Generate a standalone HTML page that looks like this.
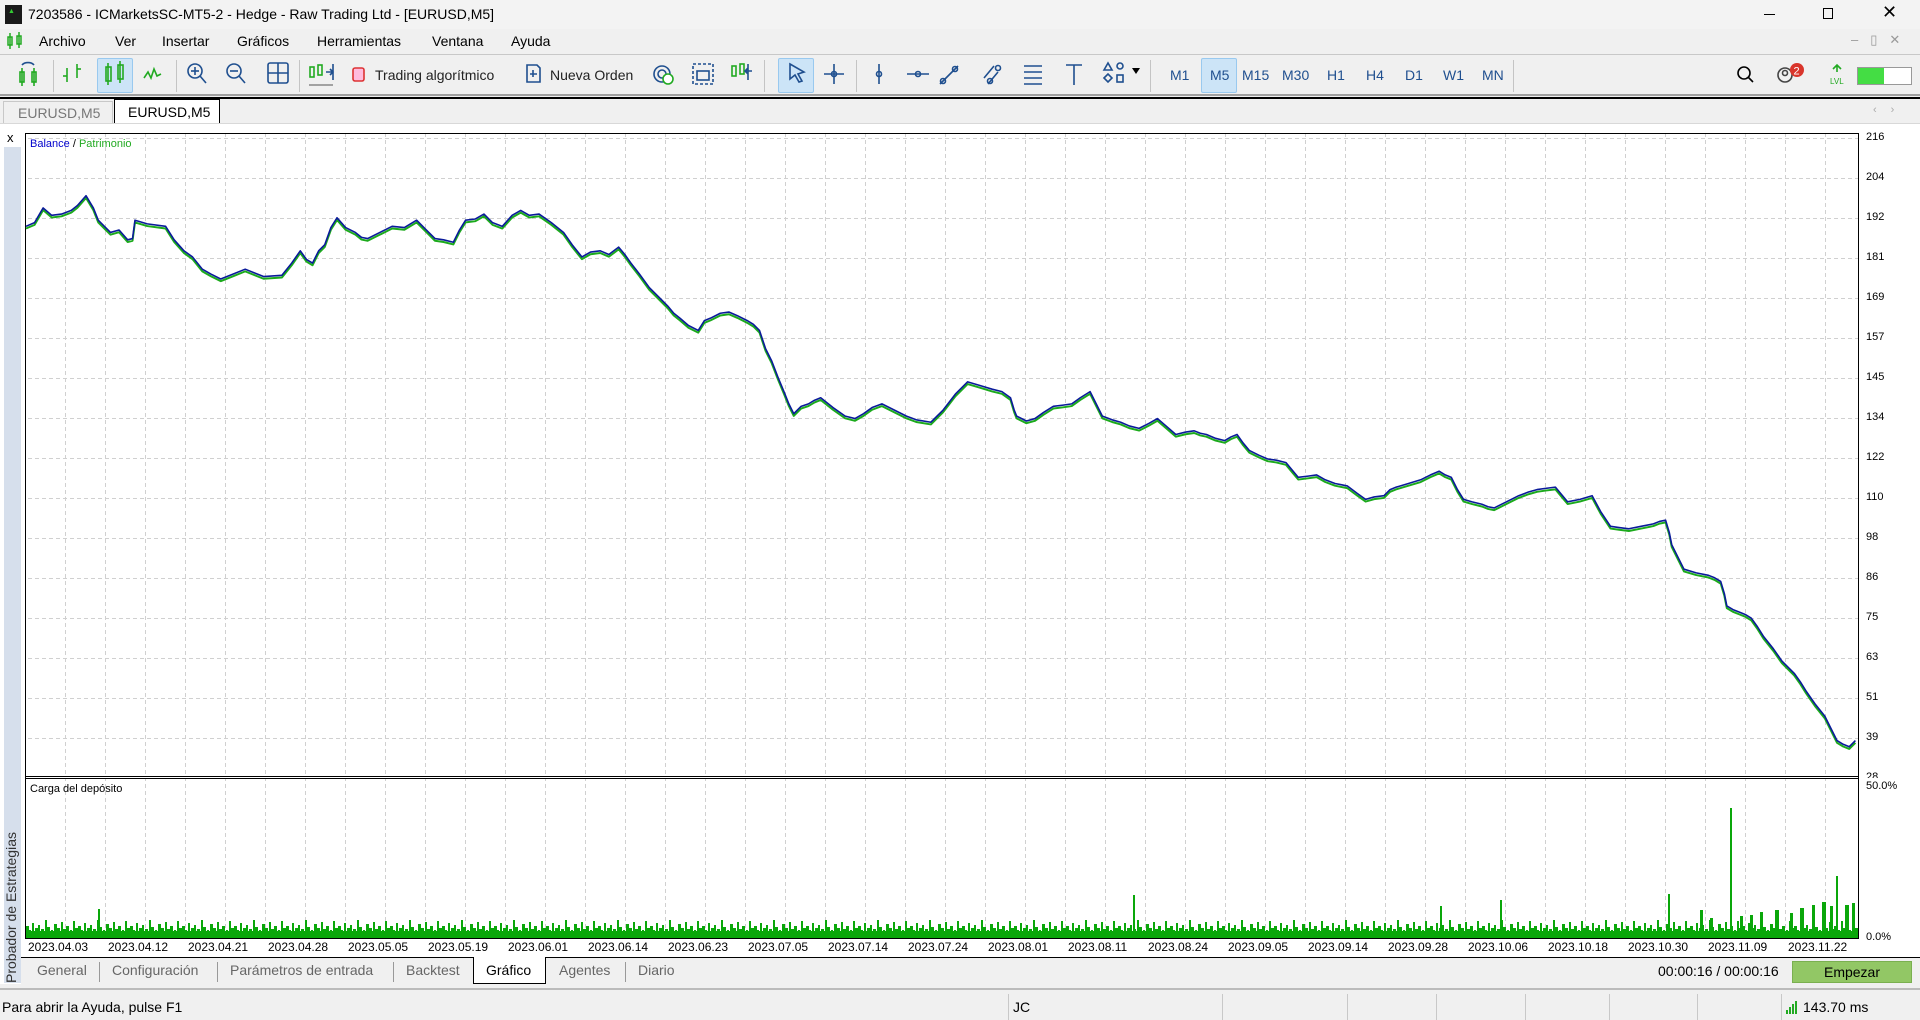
<!DOCTYPE html>
<html><head><meta charset="utf-8"><style>
*{margin:0;padding:0;box-sizing:border-box}
body{width:1920px;height:1020px;overflow:hidden;background:#f0f0f0;font-family:"Liberation Sans",sans-serif;color:#000;position:relative}
.a{position:absolute;white-space:nowrap}
.menu span{position:absolute;top:33px;font-size:14px}
.tb{position:absolute;top:54px;left:0;width:1920px;height:42px;border-top:1px solid #c8c8c8;border-bottom:2px solid #a0a0a0;background:#f0f0f0}
.sep{position:absolute;top:60px;width:1px;height:32px;background:#c4c4c4}
.hl{position:absolute;background:#cce4f7;border:1px solid #99c9ef;border-radius:2px}
.tf{position:absolute;top:67px;font-size:14px;color:#1f4f8f}
.ax{position:absolute;left:1866px;font-size:11px}
.dt{position:absolute;top:940px;font-size:12px}
.bt{position:absolute;top:962px;font-size:14px;color:#666}
.bs{position:absolute;top:962px;width:1px;height:20px;background:#999}
.ss{position:absolute;top:994px;width:1px;height:26px;background:#c8c8c8}
</style></head><body>
<div class="a" style="left:0;top:0;width:1920px;height:29px;background:#f3f3f3"></div>
<div class="a" style="left:5px;top:5px;width:17px;height:19px;background:#1a1a1a"></div>
<div class="a" style="left:8px;top:8px;font-size:7px;color:#3c3;font-weight:bold">▲</div>
<div class="a" style="left:28px;top:6px;font-size:14px">7203586 - ICMarketsSC-MT5-2 - Hedge - Raw Trading Ltd - [EURUSD,M5]</div>
<div class="a" style="left:1764px;top:14px;width:11px;height:1px;background:#000"></div>
<div class="a" style="left:1823px;top:8px;width:10px;height:11px;border:1px solid #000"></div>
<div class="a" style="left:1882px;top:2px;font-size:18px">✕</div>
<div class="menu">
<svg class="a" style="left:6px;top:31px" width="18" height="20"><g stroke="#2a2" fill="none" stroke-width="1.5"><rect x="2" y="6" width="4" height="8"/><line x1="4" y1="2" x2="4" y2="18"/><rect x="11" y="5" width="4" height="8"/><line x1="13" y1="1" x2="13" y2="17"/></g></svg>
<span style="left:39px">Archivo</span><span style="left:115px">Ver</span><span style="left:162px">Insertar</span><span style="left:237px">Gráficos</span><span style="left:317px">Herramientas</span><span style="left:432px">Ventana</span><span style="left:511px">Ayuda</span>
</div>
<div class="a" style="left:1851px;top:32px;font-size:13px;color:#999;letter-spacing:12px">–▯✕</div>
<div class="tb"></div>
<div class="hl" style="left:97px;top:58px;width:36px;height:35px"></div>
<div class="hl" style="left:778px;top:58px;width:36px;height:35px"></div>
<div class="hl" style="left:1201px;top:58px;width:36px;height:35px"></div>
<div class="sep" style="left:53px"></div><div class="sep" style="left:176px"></div><div class="sep" style="left:299px"></div><div class="sep" style="left:764px"></div><div class="sep" style="left:856px"></div><div class="sep" style="left:1150px"></div><div class="sep" style="left:1513px"></div>
<svg class="a" style="left:0;top:54px" width="1920" height="42"><g fill="none" stroke-width="1.6">
<g stroke="#2a2"><rect x="20" y="18" width="4" height="10"/><rect x="32" y="18" width="4" height="10"/><line x1="22" y1="14" x2="22" y2="32"/><line x1="34" y1="14" x2="34" y2="32"/></g><path d="M22 11 a7 5 0 0 1 12 0" stroke="#1f4f8f"/>
<g stroke="#2a2"><line x1="67" y1="14" x2="67" y2="28"/><line x1="63" y1="22" x2="67" y2="22"/><line x1="77" y1="10" x2="77" y2="24"/><line x1="77" y1="15" x2="81" y2="15"/></g>
<g stroke="#2a2"><rect x="106" y="13" width="5" height="14"/><rect x="118" y="11" width="5" height="14"/><line x1="108" y1="9" x2="108" y2="31"/><line x1="120" y1="7" x2="120" y2="29"/></g>
<path d="M144 24 l4 -6 l3 6 l3 -9 l3 7 l4 -2" stroke="#2a2"/>
<g stroke="#1f4f8f"><circle cx="195" cy="17" r="7"/><line x1="200" y1="22" x2="206" y2="29"/><line x1="191" y1="17" x2="199" y2="17"/><line x1="195" y1="13" x2="195" y2="21"/></g>
<g stroke="#1f4f8f"><circle cx="234" cy="17" r="7"/><line x1="239" y1="22" x2="245" y2="29"/><line x1="230" y1="17" x2="238" y2="17"/></g>
<g stroke="#1f4f8f"><rect x="268" y="9" width="20" height="20" rx="2"/><line x1="278" y1="9" x2="278" y2="29"/><line x1="268" y1="19" x2="288" y2="19"/></g>
<g stroke="#2a2"><rect x="310" y="13" width="4" height="10"/><rect x="318" y="11" width="4" height="10"/></g><path d="M326 18 h7 m-3 -3 l3 3 l-3 3 M333 10 v16" stroke="#1f4f8f"/><line x1="309" y1="31" x2="333" y2="31" stroke="#888"/>
<rect x="353" y="14" width="11" height="13" rx="2" stroke="#d33" fill="#fbd"/>
<path d="M527 11 h10 l3 3 v14 h-13 z M533 16 v7 M530 20 h7" stroke="#1f4f8f"/>
<g stroke="#1f4f8f"><circle cx="662" cy="20" r="8"/><circle cx="662" cy="20" r="4"/></g><circle cx="668" cy="25" r="5" stroke="#2a2" fill="#fff"/>
<rect x="693" y="10" width="20" height="20" stroke="#1f4f8f" stroke-dasharray="3 2"/><rect x="697" y="17" width="12" height="9" stroke="#1f4f8f"/>
<g stroke="#2a2"><rect x="732" y="12" width="4" height="10"/><rect x="740" y="10" width="4" height="10"/></g><path d="M752 17 h-7 m3 -3 l-3 3 l3 3 M748 10 v16" stroke="#1f4f8f"/>
<g stroke="#1f4f8f"><path d="M790 10 l14 8 l-6 2 l4 7 l-3 1 l-4 -7 l-5 4 z"/>
<line x1="834" y1="10" x2="834" y2="30"/><line x1="824" y1="20" x2="844" y2="20"/><circle cx="834" cy="20" r="2.5"/>
<line x1="879" y1="10" x2="879" y2="30"/><circle cx="879" cy="20" r="2.5"/>
<line x1="907" y1="20" x2="929" y2="20"/><circle cx="918" cy="20" r="2.5"/>
<line x1="940" y1="30" x2="958" y2="12"/><circle cx="943" cy="27" r="2.5"/><circle cx="955" cy="15" r="2.5"/>
<path d="M984 24 l10 -12 M988 30 l10 -12"/><circle cx="990" cy="27" r="2.5"/><circle cx="998" cy="14" r="2.5"/>
<path d="M1024 12 h18 M1024 18 h18 M1024 24 h18 M1024 30 h18"/>
<path d="M1066 11 h16 M1074 11 v20"/>
<path d="M1104 16 l4 -7 l4 7 z"/><circle cx="1120" cy="12" r="3"/><path d="M1104 24 l4 -4 l4 4 l-4 4 z"/><rect x="1117" y="21" width="6" height="7"/></g>
<path d="M1132 14 h8 l-4 6 z" fill="#000" stroke="none"/>
<g stroke="#000"><circle cx="1744" cy="19" r="6"/><line x1="1748" y1="23" x2="1753" y2="28"/></g>
<g stroke="#444"><circle cx="1785" cy="21" r="7"/><circle cx="1785" cy="19" r="2.5"/></g>
<circle cx="1797" cy="16" r="7" fill="#d9352b" stroke="none"/><text x="1793.5" y="20.5" font-size="11" fill="#fff" stroke="none" font-family="Liberation Sans">2</text>
<path d="M1837 18 v-7 m-4 4 l4 -4 l4 4" stroke="#2a2"/><text x="1830" y="30" font-size="8" fill="#2a2" stroke="none" font-family="Liberation Sans">LVL</text>
</g></svg>
<div class="a" style="left:375px;top:67px;font-size:14px;color:#222">Trading algorítmico</div>
<div class="a" style="left:550px;top:67px;font-size:14px;color:#222">Nueva Orden</div>
<div class="tf" style="left:1170px">M1</div><div class="tf" style="left:1210px">M5</div><div class="tf" style="left:1242px">M15</div><div class="tf" style="left:1282px">M30</div><div class="tf" style="left:1327px">H1</div><div class="tf" style="left:1366px">H4</div><div class="tf" style="left:1405px">D1</div><div class="tf" style="left:1443px">W1</div><div class="tf" style="left:1482px">MN</div>
<div class="a" style="left:1857px;top:67px;width:55px;height:18px;border:1px solid #999;background:#fff"></div>
<div class="a" style="left:1858px;top:68px;width:26px;height:16px;background:#44dd44"></div>
<div class="a" style="left:0;top:97px;width:1920px;height:2px;background:#000"></div>
<div class="a" style="left:3px;top:101px;width:110px;height:22px;border:1px solid #c8c8c8;border-bottom:none;font-size:14px;color:#777;padding:3px 0 0 14px">EURUSD,M5</div>
<div class="a" style="left:114px;top:99px;width:106px;height:24px;border:1px solid #000;border-bottom:none;background:#fff;font-size:14px;padding:4px 0 0 13px">EURUSD,M5</div>
<div class="a" style="left:1873px;top:104px;font-size:11px;color:#aaa;letter-spacing:14px">‹›</div>
<div class="a" style="left:0;top:123px;width:1920px;height:1px;background:#d8d8d8"></div>
<div class="a" style="left:0;top:124px;width:1920px;height:860px;background:#fff"></div>
<div class="a" style="left:7px;top:130px;font-size:13px">x</div>
<div class="a" style="left:4px;top:147px;width:17px;height:836px;background:#d6dfec"></div>
<div class="a" style="left:3px;top:983px;font-size:14px;color:#333;transform:rotate(-90deg);transform-origin:0 0;width:170px">Probador de Estrategias</div>
<svg class="a" style="left:0;top:0" width="1920" height="1020">
<defs>
<pattern id="vg" x="25" y="0" width="40" height="2000" patternUnits="userSpaceOnUse"><line x1="0.5" y1="0" x2="0.5" y2="2000" stroke="#d0d0d0" stroke-dasharray="4 3"/></pattern>
<pattern id="hg" x="0" y="138" width="2000" height="40" patternUnits="userSpaceOnUse"><line x1="0" y1="0.5" x2="2000" y2="0.5" stroke="#d0d0d0" stroke-dasharray="4 3"/></pattern>
<pattern id="bars" x="26" y="0" width="52" height="1000" patternUnits="userSpaceOnUse"><g fill="#0aa70a">
<rect x="0" y="926" width="3" height="12"/><rect x="3" y="930" width="2" height="8"/><rect x="6" y="923" width="2" height="15"/><rect x="9" y="928" width="3" height="10"/><rect x="12" y="925" width="2" height="13"/><rect x="15" y="929" width="3" height="9"/><rect x="19" y="920" width="2" height="18"/><rect x="21" y="927" width="3" height="11"/><rect x="25" y="930" width="2" height="8"/><rect x="28" y="924" width="3" height="14"/><rect x="31" y="928" width="3" height="10"/><rect x="35" y="922" width="2" height="16"/><rect x="37" y="929" width="3" height="9"/><rect x="40" y="926" width="3" height="12"/><rect x="44" y="930" width="2" height="8"/><rect x="47" y="921" width="2" height="17"/><rect x="49" y="928" width="3" height="10"/><rect x="0" y="931" width="52" height="7"/></g></pattern>
<polyline id="pl" points="21,185 28,182 35,170 42,176 50,175 58,172 63,168 70,160 76,170 80,180 86,186 90,190 97,188 104,196 108,195 110,180 120,183 135,185 142,196 150,205 157,210 165,220 172,224 180,228 190,224 200,220 215,226 230,225 238,215 245,205 250,212 255,215 260,205 265,200 270,186 275,178 282,186 290,190 295,194 300,195 310,190 320,185 330,186 340,180 348,188 355,195 362,196 370,198 375,188 380,180 388,179 395,175 402,182 410,185 418,176 425,172 432,176 440,175 450,182 460,190 467,200 475,210 482,206 490,205 497,208 505,202 510,208 515,215 522,224 530,235 538,243 545,250 550,256 555,260 562,266 570,270 575,262 580,260 588,256 595,255 602,258 610,262 615,265 620,270 625,285 630,295 635,308 640,320 644,330 648,338 654,332 660,330 665,327 670,325 680,333 690,340 698,342 705,338 712,333 720,330 730,335 740,340 748,343 760,345 765,340 770,335 780,322 790,312 800,315 810,318 818,320 825,325 828,335 830,340 838,344 845,342 852,337 860,332 868,331 875,330 882,325 890,320 895,330 900,340 908,343 915,345 922,348 930,350 938,346 945,342 952,348 960,355 968,353 975,352 980,354 985,355 992,358 1000,360 1005,357 1010,355 1015,362 1020,368 1028,372 1035,375 1042,376 1050,378 1055,384 1060,390 1068,389 1075,388 1082,392 1090,395 1095,396 1100,397 1108,403 1115,408 1122,406 1130,405 1135,400 1140,398 1150,395 1160,392 1168,388 1175,385 1180,388 1185,390 1190,400 1195,408 1202,410 1210,412 1215,414 1220,415 1230,410 1240,405 1248,402 1255,400 1262,399 1270,398 1275,404 1280,410 1290,408 1300,405 1307,418 1315,430 1322,431 1330,432 1340,430 1350,428 1355,426 1360,425 1363,435 1365,445 1370,455 1375,465 1385,468 1395,470 1400,472 1405,475 1408,485 1410,495 1415,498 1420,500 1425,502 1430,505 1435,512 1440,520 1448,530 1455,540 1460,545 1465,550 1470,557 1475,565 1482,575 1490,585 1495,595 1500,605 1505,608 1510,610 1515,605"/>
</defs>
<rect x="26" y="134" width="1833" height="642" fill="url(#vg)"/>
<rect x="26" y="134" width="1833" height="642" fill="url(#hg)"/>
<rect x="26" y="779" width="1833" height="159" fill="url(#vg)"/>
<rect x="26" y="779" width="1833" height="160" fill="url(#bars)"/>
<g fill="#0aa70a"><rect x="98" y="909" width="2" height="29"/><rect x="1730" y="808" width="2" height="130"/><rect x="1668" y="894" width="2" height="44"/><rect x="1836" y="876" width="2" height="62"/><rect x="1133" y="895" width="2" height="43"/><rect x="1440" y="906" width="2" height="32"/><rect x="1500" y="900" width="2" height="38"/>
<rect x="1750" y="915" width="3" height="23"/><rect x="1760" y="912" width="3" height="26"/><rect x="1775" y="910" width="4" height="28"/><rect x="1790" y="913" width="3" height="25"/><rect x="1800" y="908" width="4" height="30"/><rect x="1812" y="905" width="3" height="33"/><rect x="1822" y="902" width="4" height="36"/><rect x="1845" y="905" width="4" height="33"/><rect x="1700" y="910" width="3" height="28"/><rect x="1710" y="918" width="3" height="20"/><rect x="1740" y="916" width="3" height="22"/><rect x="1830" y="906" width="3" height="32"/><rect x="1852" y="903" width="3" height="35"/></g>
<rect x="25.5" y="133.5" width="1833" height="643" fill="none" stroke="#000"/>
<line x1="25" y1="778.5" x2="1859" y2="778.5" stroke="#000"/>
<line x1="25.5" y1="776" x2="25.5" y2="939" stroke="#000"/>
<line x1="1858.5" y1="776" x2="1858.5" y2="939" stroke="#000"/>
<line x1="25" y1="938.5" x2="1859" y2="938.5" stroke="#000"/>
<g transform="translate(26,134) scale(1.2245) translate(-21,-109)" fill="none" stroke-linejoin="round">
<use href="#pl" stroke="#1caa1c" stroke-width="1.6" transform="translate(0,1.2)"/>
<use href="#pl" stroke="#0a1a9a" stroke-width="1.3" transform="translate(0,-0.6)"/>
</g>
</svg>
<div class="a" style="left:30px;top:138px;font-size:11px;color:#0000cc">Balance <span style="color:#000">/</span> <span style="color:#2a2">Patrimonio</span></div>
<div class="a" style="left:30px;top:783px;font-size:11px">Carga del depósito</div>
<div class="ax" style="top:131px">216</div><div class="ax" style="top:171px">204</div><div class="ax" style="top:211px">192</div><div class="ax" style="top:251px">181</div><div class="ax" style="top:291px">169</div><div class="ax" style="top:331px">157</div><div class="ax" style="top:371px">145</div><div class="ax" style="top:411px">134</div><div class="ax" style="top:451px">122</div><div class="ax" style="top:491px">110</div><div class="ax" style="top:531px">98</div><div class="ax" style="top:571px">86</div><div class="ax" style="top:611px">75</div><div class="ax" style="top:651px">63</div><div class="ax" style="top:691px">51</div><div class="ax" style="top:731px">39</div><div class="ax" style="top:771px;height:7px;overflow:hidden">28</div>
<div class="ax" style="top:780px">50.0%</div><div class="ax" style="top:931px">0.0%</div>
<div class="dt" style="left:28px">2023.04.03</div><div class="dt" style="left:108px">2023.04.12</div><div class="dt" style="left:188px">2023.04.21</div><div class="dt" style="left:268px">2023.04.28</div><div class="dt" style="left:348px">2023.05.05</div><div class="dt" style="left:428px">2023.05.19</div><div class="dt" style="left:508px">2023.06.01</div><div class="dt" style="left:588px">2023.06.14</div><div class="dt" style="left:668px">2023.06.23</div><div class="dt" style="left:748px">2023.07.05</div><div class="dt" style="left:828px">2023.07.14</div><div class="dt" style="left:908px">2023.07.24</div><div class="dt" style="left:988px">2023.08.01</div><div class="dt" style="left:1068px">2023.08.11</div><div class="dt" style="left:1148px">2023.08.24</div><div class="dt" style="left:1228px">2023.09.05</div><div class="dt" style="left:1308px">2023.09.14</div><div class="dt" style="left:1388px">2023.09.28</div><div class="dt" style="left:1468px">2023.10.06</div><div class="dt" style="left:1548px">2023.10.18</div><div class="dt" style="left:1628px">2023.10.30</div><div class="dt" style="left:1708px">2023.11.09</div><div class="dt" style="left:1788px">2023.11.22</div>
<div class="a" style="left:21px;top:957px;width:1899px;height:30px;background:#f0f0f0;border-top:1px solid #000"></div>
<div class="a" style="left:473px;top:957px;width:73px;height:27px;background:#fff;border:1px solid #000;border-top:none"></div>
<div class="bt" style="left:37px">General</div><div class="bs" style="left:99px"></div>
<div class="bt" style="left:112px">Configuración</div><div class="bs" style="left:217px"></div>
<div class="bt" style="left:230px">Parámetros de entrada</div><div class="bs" style="left:393px"></div>
<div class="bt" style="left:406px">Backtest</div>
<div class="bt" style="left:486px;color:#000">Gráfico</div>
<div class="bt" style="left:559px">Agentes</div><div class="bs" style="left:625px"></div>
<div class="bt" style="left:638px">Diario</div>
<div class="a" style="left:1658px;top:963px;font-size:14px">00:00:16 / 00:00:16</div>
<div class="a" style="left:1792px;top:961px;width:120px;height:22px;background:#92c765;border:1px solid #7ab050;font-size:14px;text-align:center;padding-top:2px">Empezar</div>
<div class="a" style="left:0;top:988px;width:1920px;height:2px;background:#bbb"></div>
<div class="a" style="left:0;top:990px;width:1920px;height:30px;background:#f0f0f0"></div>
<div class="a" style="left:2px;top:999px;font-size:14px">Para abrir la Ayuda, pulse F1</div>
<div class="ss" style="left:1008px"></div><div class="ss" style="left:1222px"></div><div class="ss" style="left:1347px"></div><div class="ss" style="left:1436px"></div><div class="ss" style="left:1525px"></div><div class="ss" style="left:1609px"></div><div class="ss" style="left:1697px"></div><div class="ss" style="left:1781px"></div>
<div class="a" style="left:1013px;top:999px;font-size:14px">JC</div>
<svg class="a" style="left:1786px;top:1000px" width="14" height="14"><g fill="#2a2"><rect x="0" y="10" width="2" height="4"/><rect x="3" y="7" width="2" height="7"/><rect x="6" y="4" width="2" height="10"/><rect x="9" y="1" width="2" height="13"/></g></svg>
<div class="a" style="left:1803px;top:999px;font-size:14px">143.70 ms</div>
</body></html>
